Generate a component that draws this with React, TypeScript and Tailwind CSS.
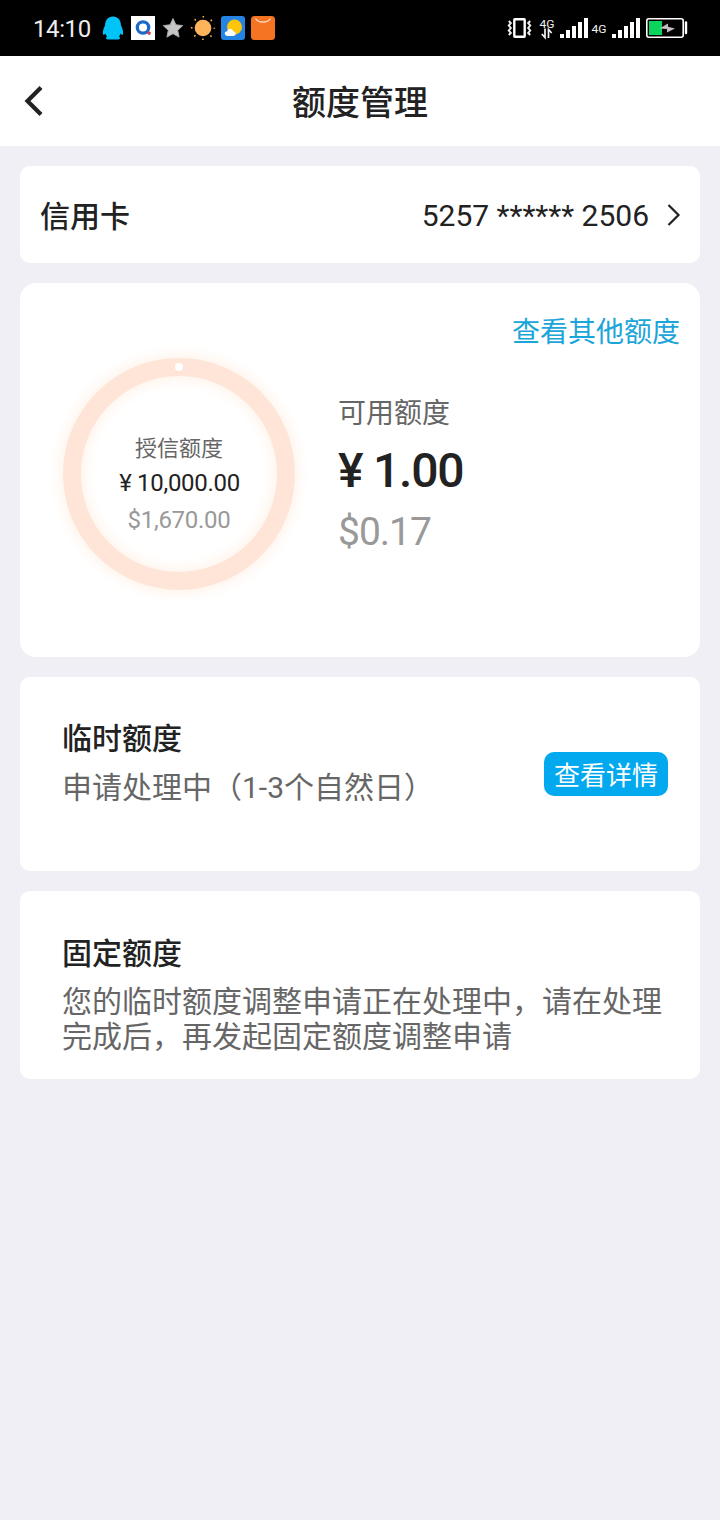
import type { ReactNode } from "react";

function StatusBar() {
  return (
    <div className="flex h-14 items-center justify-between bg-black pl-[33px] text-white">
      <div className="flex items-center">
        <span className="w-[68px] pt-px text-[24px] leading-[28px] tracking-[-0.4px] text-[#eeeeee]">14:10</span>
        <svg width="176" height="28" viewBox="101 14 176 28">
          <path
            d="M113 16.500c-5 0-7.900 3.600-7.900 8.800-1.200 2.600-2.700 5.900-2.100 8.900.4 1.100 1.500.4 2.400-.8.3 1.300.9 2.300 1.700 3.200-1.500.7-1.700 2.500.3 2.800h11.200c2-.3 1.800-2.100.3-2.800.8-.9 1.400-1.900 1.700-3.200.9 1.200 2 1.900 2.400.8.6-3-.9-6.300-2.100-8.900 0-5.200-2.900-8.800-7.900-8.800z"
            fill="#00c3f8"
          />
          <rect x="131" y="16" width="24" height="24" fill="#fff" />
          <circle cx="143" cy="27.500" r="5.700" fill="none" stroke="#1c69c8" strokeWidth="3.300" />
          <path d="M147.500 32l2.800 2" stroke="#d0405a" strokeWidth="3" />
          <path
            d="M173 18.500l2.900 6.300 6.900.8-5.100 4.700 1.400 6.800-6.100-3.400-6.100 3.400 1.400-6.800-5.100-4.700 6.900-.8z"
            fill="#c6c6c6"
            stroke="#a8a8a8"
          />
          <circle cx="203" cy="28" r="8.300" fill="#ffb45c" />
          <circle cx="203" cy="28" r="11.300" fill="none" stroke="#ffb45c" strokeWidth="1.600" strokeDasharray="1.600 7.275" strokeDashoffset="0.8" />
          <rect x="221" y="16" width="24" height="24" rx="3" fill="#2583e4" />
          <circle cx="234.500" cy="27" r="7.500" fill="#fdc60a" />
          <path d="M228 36c-4 0-4.300-4.600-.7-4.800.9-3.400 5.300-3.100 5.800 0 3.500.1 3.600 4.800 0 4.800z" fill="#fff" />
          <rect x="251" y="16" width="24" height="24" rx="3.500" fill="#f57424" />
          <path d="M255.500 18.500c3 4.800 12 4.800 15 0" fill="none" stroke="#ffe3d0" strokeWidth="1.200" />
        </svg>
      </div>
      <svg width="214" height="28" viewBox="506 14 214 28" fontFamily="Roboto">
        <rect x="514.300" y="19.300" width="10.400" height="17.500" rx="0.500" fill="none" stroke="#fff" strokeWidth="2.400" />
        <path
          d="M508.800 21l2 2-2 2.500 2 2.500-2 2.500 2 2.500-2 2M530.200 21l-2 2 2 2.500-2 2.500 2 2.500-2 2.500 2 2"
          fill="none"
          stroke="#eee"
          strokeWidth="2"
        />
        <text x="539.500" y="28" fontSize="11.500" fill="#f4f4f4" textLength="15" lengthAdjust="spacingAndGlyphs">4G</text>
        <path d="M545 28.500v9l-3.200-3.500M548.500 38v-8.500l3.200 3.500" fill="none" stroke="#f4f4f4" strokeWidth="1.700" />
        <path d="M560 34h4v4h-4zM566 30h4v8h-4zM572 26h4v12h-4zM578 22h4v16h-4zM584 18h4v20h-4z" fill="#fff" />
        <text x="591.500" y="33" fontSize="11.500" fill="#f4f4f4" textLength="15" lengthAdjust="spacingAndGlyphs">4G</text>
        <path d="M612 34h4v4h-4zM618 30h4v8h-4zM624 26h4v12h-4zM630 22h4v16h-4zM636 18h4v20h-4z" fill="#fff" />
        <rect x="646.800" y="18.800" width="36.400" height="18.400" rx="2" fill="none" stroke="#fff" strokeWidth="1.600" />
        <rect x="649" y="21" width="13" height="14" fill="#0ad45c" />
        <path d="M659.500 28.500l8.500-5v3.300l7 1.700-8 4v-3.500z" fill="#c5bbc0" />
        <path d="M686 22.500v10.500" stroke="#fff" strokeWidth="2.400" strokeLinecap="round" />
      </svg>
    </div>
  );
}

function Card({ className, children }: { className: string; children: ReactNode }) {
  return <section className={"bg-white " + className}>{children}</section>;
}

function LimitRing() {
  return (
    <div className="relative flex size-[260px] flex-col items-center pt-[87px]">
      <svg className="absolute inset-0" width="260" height="260" viewBox="0 0 260 260">
        <defs>
          <filter id="glow" x="-20%" y="-20%" width="140%" height="140%">
            <feGaussianBlur stdDeviation="6" />
          </filter>
        </defs>
        <circle cx="130" cy="130" r="107" fill="none" stroke="#fff4eb" strokeWidth="26" filter="url(#glow)" />
        <circle cx="130" cy="130" r="107" fill="none" stroke="#ffe5d8" strokeWidth="18" />
        <circle cx="130" cy="23" r="4" fill="#fff" />
      </svg>
      <span className="relative text-[22px] leading-[36px] text-[#666]">授信额度</span>
      <span className="relative -mt-[2px] pl-px text-[24px] leading-[36px] tracking-[-0.3px] text-[#222]">¥ 10,000.00</span>
      <span className="relative mt-px text-[24px] leading-[37px] tracking-[-0.3px] text-[#999]">$1,670.00</span>
    </div>
  );
}

export default function App() {
  return (
    <div className="min-h-[1520px] w-[720px] bg-[#efeff5] font-['Roboto','Noto_Sans_CJK_SC',sans-serif] text-[#222]">
      <StatusBar />
      <header className="grid h-[90px] grid-cols-[60px_1fr_60px] items-center bg-white">
        <svg width="60" height="40" viewBox="0 0 60 40">
          <path d="M41 6.500L27.500 20 41 33.500" fill="none" stroke="#222" strokeWidth="4.200" />
        </svg>
        <h1 className="pt-[3px] text-center text-[34px] leading-[48px] font-medium">额度管理</h1>
      </header>
      <main className="flex flex-col gap-5 p-5">
        <Card className="flex h-[97px] items-center rounded-[10px] pr-[19px] pl-5">
          <h2 className="flex-1 pt-[4px] text-[30px] leading-[44px] font-medium">信用卡</h2>
          <span className="pt-[3px] text-[30px] leading-[44px]">5257 ****** 2506</span>
          <svg className="ml-[18px]" width="14" height="24" viewBox="0 0 14 24">
            <path d="M1.500 2l10 10-10 10" fill="none" stroke="#222" strokeWidth="2.200" />
          </svg>
        </Card>
        <Card className="h-[374px] rounded-[16px] pt-[30px]">
          <a className="block pr-5 text-right text-[28px] leading-[40px] text-[#1ba5d8]">查看其他额度</a>
          <div className="-mt-[9px] flex pl-[29px]">
            <LimitRing />
            <div className="ml-[29px] flex flex-col pt-[50px]">
              <span className="text-[28px] leading-[40px] text-[#666]">可用额度</span>
              <span className="text-[48px] leading-[73px] font-medium tracking-[-1.2px]">¥ 1.00</span>
              <span className="mt-[3px] text-[39px] leading-[44px] tracking-[-1px] text-[#999]">$0.17</span>
            </div>
          </div>
        </Card>
        <Card className="flex h-[194px] items-start justify-between rounded-[10px] pt-[38px] pr-8 pl-[42px]">
          <div>
            <h2 className="text-[30px] leading-[48px] font-medium">临时额度</h2>
            <p className="text-[30px] leading-[50px] text-[#666]">申请处理中（1-3个自然日）</p>
          </div>
          <button className="mt-[37px] h-11 w-[124px] rounded-[10px] bg-[#02a9ee] pt-[4px] text-[26px] leading-[40px] text-white">
            查看详情
          </button>
        </Card>
        <Card className="h-[188px] rounded-[10px] pt-[39px] pr-8 pl-[42px]">
          <h2 className="text-[30px] leading-[48px] font-medium">固定额度</h2>
          <p className="mt-[6px] text-[30px] leading-[35px] text-[#666]">
            您的临时额度调整申请正在处理中，请在处理完成后，再发起固定额度调整申请
          </p>
        </Card>
      </main>
    </div>
  );
}
